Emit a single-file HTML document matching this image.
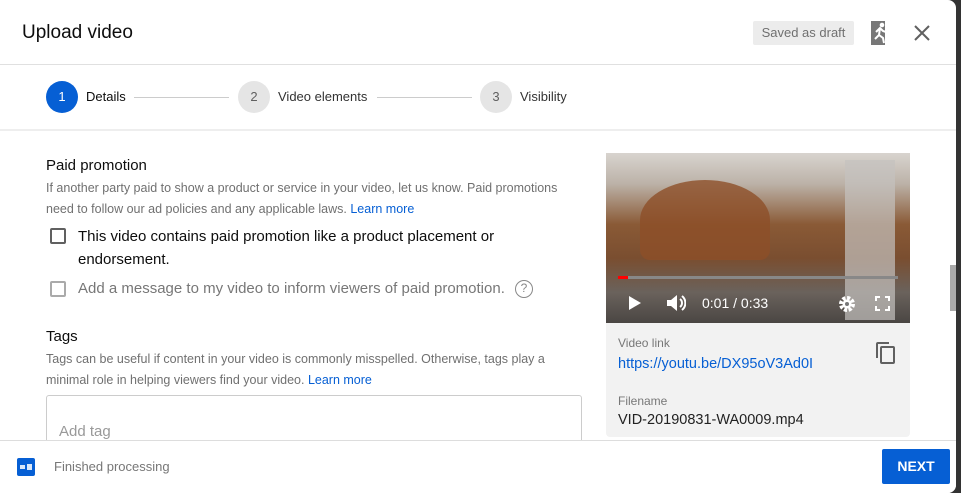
<!DOCTYPE html>
<html><head><style>
*{margin:0;padding:0;box-sizing:border-box}
body{width:961px;height:493px;background:#333;font-family:"Liberation Sans",sans-serif;overflow:hidden;position:relative}
.dlg{position:absolute;left:0;top:0;width:956px;height:493px;background:#fff;border-radius:0 8px 8px 0;overflow:hidden}
.abs{position:absolute}
.t{color:#0d0d0d}
.g{color:#707070}
.b{color:#065fd4}
.cb{position:absolute;width:16px;height:16px;border:2px solid #606060;border-radius:2px}
</style></head><body>
<div class="dlg">
<div class="abs t" style="left:22px;top:22px;font-size:19px">Upload video</div>
<div class="abs" style="left:753px;top:21px;width:101px;height:24px;background:#ececec;border-radius:2px;color:#707070;font-size:13px;line-height:24px;text-align:center">Saved as draft</div>
<svg class="abs" style="left:871px;top:21px" width="20" height="24" viewBox="0 0 20 24"><rect x="0" y="0" width="14" height="24" fill="#777"/><circle cx="11" cy="4" r="2.3" fill="#fff"/><path d="M5 11l4-4 3 3 3 1M9 7l-1 7-4 4M8 14l4 3 1 5" stroke="#fff" stroke-width="2" fill="none"/></svg>
<svg class="abs" style="left:914px;top:25px" width="16" height="16"><path d="M1 1L15 15M15 1L1 15" stroke="#606060" stroke-width="2"/></svg>
<div class="abs" style="left:0;top:64px;width:956px;height:1px;background:#e0e0e0"></div>
<div class="abs" style="left:46px;top:81px;width:32px;height:32px;border-radius:50%;background:#065fd4;color:#fff;font-size:13px;line-height:32px;text-align:center">1</div>
<div class="abs t" style="left:86px;top:89px;font-size:13px">Details</div>
<div class="abs" style="left:134px;top:97px;width:95px;height:1px;background:#ccc"></div>
<div class="abs" style="left:238px;top:81px;width:32px;height:32px;border-radius:50%;background:#e5e5e5;color:#606060;font-size:13px;line-height:32px;text-align:center">2</div>
<div class="abs t" style="left:278px;top:89px;font-size:13px;color:#333">Video elements</div>
<div class="abs" style="left:377px;top:97px;width:95px;height:1px;background:#ccc"></div>
<div class="abs" style="left:480px;top:81px;width:32px;height:32px;border-radius:50%;background:#e5e5e5;color:#606060;font-size:13px;line-height:32px;text-align:center">3</div>
<div class="abs" style="left:520px;top:89px;font-size:13px;color:#333">Visibility</div>
<div class="abs" style="left:0;top:129px;width:956px;height:2px;background:#eee"></div>

<div class="abs t" style="left:46px;top:157px;font-size:15px">Paid promotion</div>
<div class="abs g" style="left:46px;top:178px;font-size:12.5px;line-height:21px;width:540px">If another party paid to show a product or service in your video, let us know. Paid promotions need to follow our ad policies and any applicable laws. <span class="b">Learn more</span></div>
<div class="cb" style="left:50px;top:228px"></div>
<div class="abs t" style="left:78px;top:225px;font-size:15px;line-height:23px;width:470px">This video contains paid promotion like a product placement or endorsement.</div>
<div class="cb" style="left:50px;top:281px;border-color:#aaa"></div>
<div class="abs" style="left:78px;top:280px;font-size:15px;color:#777">Add a message to my video to inform viewers of paid promotion.</div>
<div class="abs" style="left:515px;top:280px;width:18px;height:18px;border:1.5px solid #888;border-radius:50%;color:#888;font-size:12px;line-height:15px;text-align:center">?</div>
<div class="abs t" style="left:46px;top:328px;font-size:15px">Tags</div>
<div class="abs g" style="left:46px;top:349px;font-size:12.5px;line-height:21px;width:540px">Tags can be useful if content in your video is commonly misspelled. Otherwise, tags play a minimal role in helping viewers find your video. <span class="b">Learn more</span></div>
<div class="abs" style="left:46px;top:395px;width:536px;height:60px;border:1px solid #ccc;border-radius:3px"></div>
<div class="abs" style="left:59px;top:423px;font-size:15px;color:#999">Add tag</div>

<div class="abs" style="left:606px;top:153px;width:304px;height:170px;background:linear-gradient(180deg,#d8d4cf 0%,#bcb2a8 18%,#8a5a36 42%,#7a4e30 62%,#6a625c 82%,#4a4643 100%)"></div>
<div class="abs" style="left:640px;top:180px;width:130px;height:80px;border-radius:50% 50% 10px 10px;background:#8d4f28;opacity:.8"></div>
<div class="abs" style="left:845px;top:160px;width:50px;height:160px;background:#c4c2bf;opacity:.7"></div>
<div class="abs" style="left:618px;top:276px;width:280px;height:3px;background:#888"></div>
<div class="abs" style="left:618px;top:276px;width:10px;height:3px;background:#f00"></div>
<svg class="abs" style="left:628px;top:295px" width="14" height="16"><path d="M1 1L13 8L1 15Z" fill="#fff"/></svg>
<svg class="abs" style="left:666px;top:294px" width="20" height="18"><path d="M1 6h4l6-5v16l-6-5H1Z" fill="#fff"/><path d="M14 5a5 5 0 010 8M16 2a9 9 0 010 14" stroke="#fff" stroke-width="2" fill="none"/></svg>
<div class="abs" style="left:702px;top:295px;color:#fff;font-size:14px">0:01 / 0:33</div>
<svg class="abs" style="left:838px;top:295px" width="18" height="18" viewBox="0 0 18 18"><circle cx="9" cy="9" r="6" fill="none" stroke="#fff" stroke-width="4" stroke-dasharray="3 1.7"/><circle cx="9" cy="9" r="4.5" fill="#fff"/><circle cx="9" cy="9" r="2" fill="#777"/></svg>
<svg class="abs" style="left:875px;top:296px" width="15" height="15"><path d="M1 5V1h4M10 1h4v4M14 10v4h-4M5 14H1v-4" stroke="#fff" stroke-width="2" fill="none"/></svg>
<div class="abs" style="left:606px;top:323px;width:304px;height:114px;background:#f2f2f2;border-radius:0 0 4px 4px"></div>
<div class="abs" style="left:618px;top:336px;font-size:12px;color:#777">Video link</div>
<div class="abs b" style="left:618px;top:356px;font-size:14.5px">https://youtu.be/DX95oV3Ad0I</div>
<svg class="abs" style="left:875px;top:341px" width="21" height="24"><rect x="6" y="6" width="13" height="16" rx="1" fill="none" stroke="#606060" stroke-width="2"/><path d="M2 17V3a1 1 0 011-1h11" stroke="#606060" stroke-width="2" fill="none"/></svg>
<div class="abs" style="left:618px;top:394px;font-size:12px;color:#777">Filename</div>
<div class="abs t" style="left:618px;top:412px;font-size:14.5px;color:#222">VID-20190831-WA0009.mp4</div>

<div class="abs" style="left:0;top:440px;width:956px;height:53px;background:#fff;border-top:1px solid #ddd"></div>
<div class="abs" style="left:17px;top:458px;width:18px;height:18px;background:#065fd4;border-radius:2px"></div>
<div class="abs" style="left:20px;top:465px;width:5px;height:4px;background:#fff;opacity:.85"></div>
<div class="abs" style="left:27px;top:464px;width:5px;height:6px;background:#fff;opacity:.85"></div>
<div class="abs" style="left:54px;top:459px;font-size:13px;color:#777">Finished processing</div>
<div class="abs" style="left:882px;top:449px;width:68px;height:35px;background:#065fd4;border-radius:2px;color:#fff;font-size:14px;font-weight:bold;line-height:35px;text-align:center">NEXT</div>
<div class="abs" style="left:950px;top:265px;width:6px;height:46px;background:#aaa"></div>
</div>
</body></html>
